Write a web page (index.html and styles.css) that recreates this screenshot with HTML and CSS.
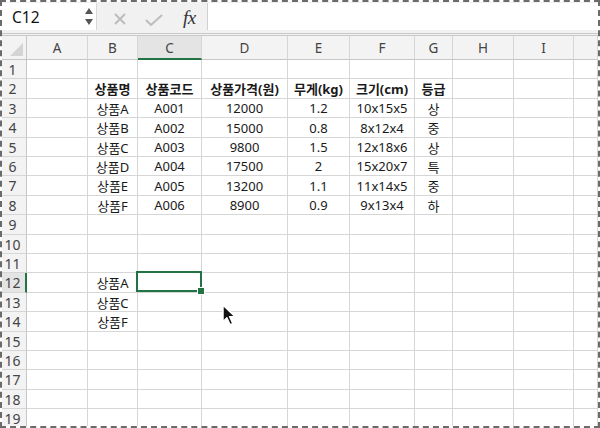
FILE: index.html
```html
<!DOCTYPE html>
<html lang="ko">
<head>
<meta charset="utf-8">
<link rel="stylesheet" href="styles.css">
</head>
<body>
<div class="frame">
  <div class="fbar">
    <div class="namebox">
      <span class="ref">C12</span>
      <span class="spin"><span class="up"></span><span class="down"></span></span>
    </div>
    <div class="tools">
      <svg class="ic-x" width="14" height="14" viewBox="0 0 14 14"><path d="M2 2 L12 12 M12 2 L2 12" stroke="#bdbdbd" stroke-width="2" fill="none"/></svg>
      <svg class="ic-ok" width="18" height="12" viewBox="0 0 18 12"><path d="M1 6 L6 11 L17 1" stroke="#bdbdbd" stroke-width="2" fill="none"/></svg>
      <span class="fx">fx</span>
    </div>
    <div class="finput"></div>
  </div>
  <div class="sheet">
    <div class="h corner"></div><div class="h">A</div><div class="h">B</div><div class="h hsel">C</div><div class="h">D</div><div class="h">E</div><div class="h">F</div><div class="h">G</div><div class="h">H</div><div class="h">I</div><div class="h"></div>

    <div class="rh">1</div><div class="c"></div><div class="c"></div><div class="c"></div><div class="c"></div><div class="c"></div><div class="c"></div><div class="c"></div><div class="c"></div><div class="c"></div><div class="c"></div>

    <div class="rh">2</div><div class="c"></div><div class="c b">상품명</div><div class="c b">상품코드</div><div class="c b">상품가격(원)</div><div class="c b">무게(kg)</div><div class="c b">크기(cm)</div><div class="c b">등급</div><div class="c"></div><div class="c"></div><div class="c"></div>

    <div class="rh">3</div><div class="c"></div><div class="c">상품A</div><div class="c">A001</div><div class="c">12000</div><div class="c">1.2</div><div class="c">10x15x5</div><div class="c">상</div><div class="c"></div><div class="c"></div><div class="c"></div>

    <div class="rh">4</div><div class="c"></div><div class="c">상품B</div><div class="c">A002</div><div class="c">15000</div><div class="c">0.8</div><div class="c">8x12x4</div><div class="c">중</div><div class="c"></div><div class="c"></div><div class="c"></div>

    <div class="rh">5</div><div class="c"></div><div class="c">상품C</div><div class="c">A003</div><div class="c">9800</div><div class="c">1.5</div><div class="c">12x18x6</div><div class="c">상</div><div class="c"></div><div class="c"></div><div class="c"></div>

    <div class="rh">6</div><div class="c"></div><div class="c">상품D</div><div class="c">A004</div><div class="c">17500</div><div class="c">2</div><div class="c">15x20x7</div><div class="c">특</div><div class="c"></div><div class="c"></div><div class="c"></div>

    <div class="rh">7</div><div class="c"></div><div class="c">상품E</div><div class="c">A005</div><div class="c">13200</div><div class="c">1.1</div><div class="c">11x14x5</div><div class="c">중</div><div class="c"></div><div class="c"></div><div class="c"></div>

    <div class="rh">8</div><div class="c"></div><div class="c">상품F</div><div class="c">A006</div><div class="c">8900</div><div class="c">0.9</div><div class="c">9x13x4</div><div class="c">하</div><div class="c"></div><div class="c"></div><div class="c"></div>

    <div class="rh">9</div><div class="c"></div><div class="c"></div><div class="c"></div><div class="c"></div><div class="c"></div><div class="c"></div><div class="c"></div><div class="c"></div><div class="c"></div><div class="c"></div>

    <div class="rh">10</div><div class="c"></div><div class="c"></div><div class="c"></div><div class="c"></div><div class="c"></div><div class="c"></div><div class="c"></div><div class="c"></div><div class="c"></div><div class="c"></div>

    <div class="rh">11</div><div class="c"></div><div class="c"></div><div class="c"></div><div class="c"></div><div class="c"></div><div class="c"></div><div class="c"></div><div class="c"></div><div class="c"></div><div class="c"></div>

    <div class="rh rsel">12</div><div class="c"></div><div class="c">상품A</div><div class="c active"><span class="sel"><span class="handle"></span></span></div><div class="c"></div><div class="c"></div><div class="c"></div><div class="c"></div><div class="c"></div><div class="c"></div><div class="c"></div>

    <div class="rh">13</div><div class="c"></div><div class="c">상품C</div><div class="c"></div><div class="c"></div><div class="c"></div><div class="c"></div><div class="c"></div><div class="c"></div><div class="c"></div><div class="c"></div>

    <div class="rh">14</div><div class="c"></div><div class="c">상품F</div><div class="c"></div><div class="c"></div><div class="c"></div><div class="c"></div><div class="c"></div><div class="c"></div><div class="c"></div><div class="c"></div>

    <div class="rh">15</div><div class="c"></div><div class="c"></div><div class="c"></div><div class="c"></div><div class="c"></div><div class="c"></div><div class="c"></div><div class="c"></div><div class="c"></div><div class="c"></div>

    <div class="rh">16</div><div class="c"></div><div class="c"></div><div class="c"></div><div class="c"></div><div class="c"></div><div class="c"></div><div class="c"></div><div class="c"></div><div class="c"></div><div class="c"></div>

    <div class="rh">17</div><div class="c"></div><div class="c"></div><div class="c"></div><div class="c"></div><div class="c"></div><div class="c"></div><div class="c"></div><div class="c"></div><div class="c"></div><div class="c"></div>

    <div class="rh">18</div><div class="c"></div><div class="c"></div><div class="c"></div><div class="c"></div><div class="c"></div><div class="c"></div><div class="c"></div><div class="c"></div><div class="c"></div><div class="c"></div>

    <div class="rh">19</div><div class="c"></div><div class="c"></div><div class="c"></div><div class="c"></div><div class="c"></div><div class="c"></div><div class="c"></div><div class="c"></div><div class="c"></div><div class="c"></div>
  </div>
  <svg class="cursor" width="15" height="23" viewBox="0 0 14 21"><path d="M1 1 L1 16 L4.5 12.5 L7.5 19 L10 18 L7 11.5 L12 11.5 Z" fill="#111" stroke="#fff" stroke-width="1.2" stroke-linejoin="round"/></svg>
</div>
</body>
</html>
```

FILE: styles.css
```css
html, body {
  margin: 0;
  padding: 0;
  background: #fff;
}

.frame {
  position: relative;
  width: 600px;
  height: 428px;
  box-sizing: border-box;
  border: 2px dashed #6b6b6b;
  overflow: hidden;
  font-family: "Noto Sans", "Noto Sans CJK KR", sans-serif;
  color: #222;
}

.fbar {
  display: flex;
  height: 31px;
  background: #f1f1f1;
  border-bottom: 3px double #c9c9c9;
}

.namebox {
  display: flex;
  align-items: center;
  justify-content: space-between;
  width: 95px;
  height: 27px;
  margin-top: 1px;
  box-sizing: border-box;
  padding: 0 3px 0 10px;
  background: #fff;
  border-right: 1px solid #d8d8d8;
}

.ref {
  font-size: 15.5px;
  color: #111;
}

.spin {
  display: flex;
  flex-direction: column;
  gap: 5px;
}

.up, .down {
  width: 0;
  height: 0;
  border-left: 4px solid transparent;
  border-right: 4px solid transparent;
}

.up { border-bottom: 6px solid #555; }
.down { border-top: 6px solid #555; }

.tools {
  display: flex;
  align-items: center;
  width: 110px;
  padding-left: 16px;
  box-sizing: border-box;
}

.ic-x { margin-top: 3px; }
.ic-ok { margin-left: 18px; margin-top: 5px; }

.fx {
  margin-left: 20px;
  font-family: "Liberation Serif", "DejaVu Serif", serif;
  font-style: italic;
  font-size: 19px;
  color: #333;
  letter-spacing: -0.5px;
}

.finput {
  flex: 1;
  height: 27px;
  margin-top: 1px;
  background: #fff;
  border-left: 1px solid #d0d0d0;
}

.sheet {
  display: grid;
  grid-template-columns: 25px 61px 50px 64px 86px 62px 65px 38px 61px 60px 1fr;
  grid-template-rows: 24px 19px 20px 19px 20px 19px 19px 20px 19px 20px 19px 19px 20px 19px 20px 19px 19px 20px 19px 20px;
}

.h {
  display: flex;
  align-items: center;
  justify-content: center;
  box-sizing: border-box;
  background: #f3f3f3;
  border-right: 1px solid #d6d6d6;
  border-bottom: 1px solid #c6c6c6;
  font-size: 13.5px;
  color: #444;
  padding-top: 1px;
}

.corner {
  position: relative;
  border-right-color: #c6c6c6;
}

.corner::after {
  content: "";
  position: absolute;
  right: 3px;
  bottom: 3px;
  width: 0;
  height: 0;
  border-left: 13px solid transparent;
  border-bottom: 13px solid #d4d4d4;
}

.hsel {
  background: #e4e4e4;
  border-bottom: 2px solid #217346;
}

.rh {
  display: flex;
  align-items: center;
  justify-content: center;
  box-sizing: border-box;
  padding-right: 3px;
  background: #f3f3f3;
  border-right: 1px solid #c6c6c6;
  border-bottom: 1px solid #d6d6d6;
  font-size: 14px;
  color: #444;
}

.rsel {
  background: #e4e4e4;
  border-right: 2px solid #217346;
  padding-right: 2px;
}

.c {
  display: flex;
  align-items: center;
  justify-content: center;
  box-sizing: border-box;
  border-right: 1px solid #d6d6d6;
  border-bottom: 1px solid #d6d6d6;
  font-size: 13px;
  color: #1a1a1a;
  white-space: nowrap;
}

.b {
  font-weight: 700;
}

.active {
  position: relative;
}

.sel {
  position: absolute;
  top: -2px;
  left: -2px;
  right: -1px;
  bottom: 0;
  border: 2px solid #217346;
  z-index: 2;
}

.handle {
  position: absolute;
  right: -5px;
  bottom: -5px;
  width: 6px;
  height: 6px;
  background: #217346;
  border: 1px solid #fff;
}

.cursor {
  position: absolute;
  left: 220px;
  top: 302px;
  z-index: 5;
}
```
